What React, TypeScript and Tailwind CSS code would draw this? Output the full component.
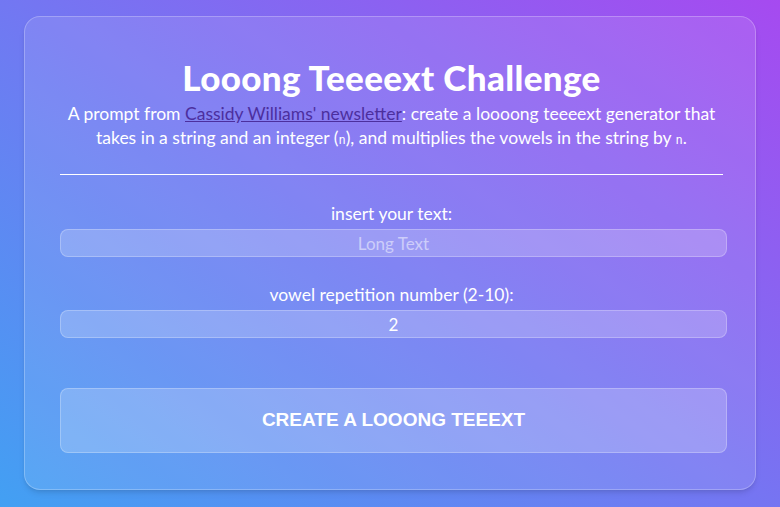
export default function App() {
  return (
    <div className="min-h-[507px] w-full bg-[linear-gradient(35deg,#42a0f3_0%,#7476f2_50%,#a64af0_100%)] px-6 py-4 font-['Lato','Noto_Sans',sans-serif] text-white">
      <div className="rounded-2xl border border-white/25 bg-white/10 pt-[38px] pr-8 pb-9 pl-[35px] shadow-md">
        {/* Header */}
        <h1 className="text-center text-[35px] leading-[44px] font-black tracking-[0.01em]">Looong Teeeext Challenge</h1>
        <p className="mt-[3px] text-center text-[17.5px] leading-6">
          A prompt from{' '}
          <a href="#" className="text-[#4c2f9e] underline">
            Cassidy Williams' newsletter
          </a>
          : create a loooong teeeext generator that takes in a string and an integer (
          <code className="font-['DejaVu_Sans_Mono',monospace] text-[12px] leading-none">n</code>), and multiplies the vowels in the string by{' '}
          <code className="font-['DejaVu_Sans_Mono',monospace] text-[12px] leading-none">n</code>.
        </p>

        <hr className="mt-[24px] border-0 border-t border-white" />

        {/* Form */}
        <form className="mt-[27px] flex flex-col" onSubmit={(e) => e.preventDefault()}>
          <label className="flex flex-col items-center gap-[3px] text-[17.5px] leading-6">
            insert your text:
            <input
              type="text"
              placeholder="Long Text"
              className="h-[28px] w-[calc(100%+4px)] self-start rounded-lg border border-white/25 bg-white/20 text-center text-[17px] text-white outline-none placeholder:text-white/50"
            />
          </label>
          <label className="mt-[26px] flex flex-col items-center gap-[3px] text-[17.5px] leading-6">
            vowel repetition number (2-10):
            <input
              type="number"
              defaultValue={2}
              min={2}
              max={10}
              className="h-[28px] w-[calc(100%+4px)] self-start appearance-none rounded-lg border border-white/25 bg-white/20 text-center text-[17px] text-white outline-none [&::-webkit-inner-spin-button]:appearance-none"
            />
          </label>
          <button
            type="submit"
            className="mt-[50px] h-[65px] w-[calc(100%+4px)] rounded-lg border border-white/25 bg-white/20 font-['Liberation_Sans',Arial,sans-serif] text-[19px] font-bold uppercase text-white"
          >
            Create a looong teeext
          </button>
        </form>
      </div>
    </div>
  );
}
